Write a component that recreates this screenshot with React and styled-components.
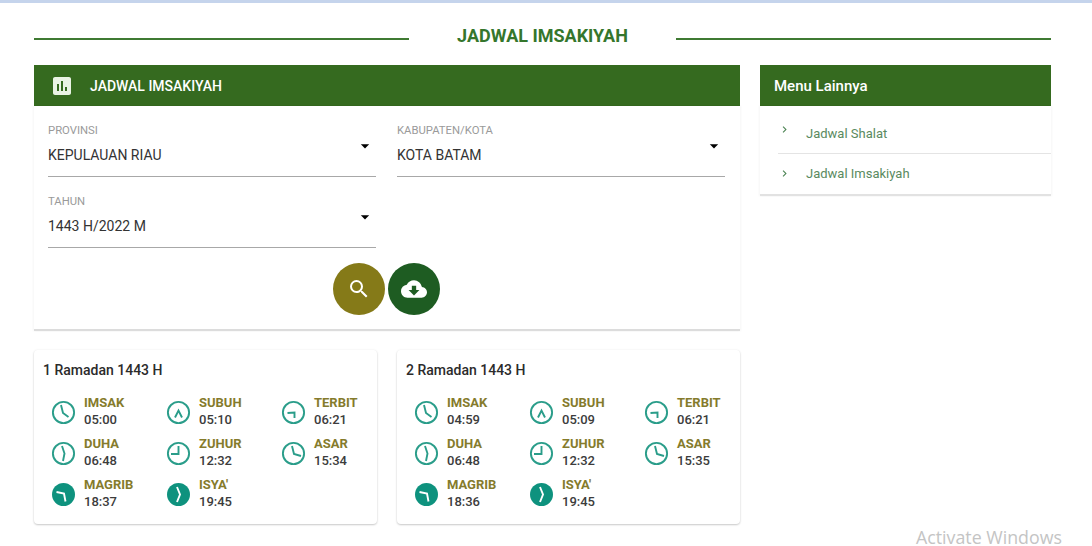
import styled, { createGlobalStyle } from "styled-components";
import { MdAssessment, MdSearch, MdCloudDownload, MdChevronRight, MdArrowDropDown } from "react-icons/md";

const GlobalStyle = createGlobalStyle`
  html, body {
    margin: 0;
    padding: 0;
    background: #fff;
  }
  body {
    font-family: Roboto, "Liberation Sans", sans-serif;
    overflow: hidden;
  }
`;

const Page = styled.div`
  position: relative;
  width: 1092px;
  height: 546px;
  overflow: hidden;
  border-top: 3px solid #c5d4ec;
  box-sizing: border-box;
  padding: 0 41px 0 34px;
`;

const TitleRow = styled.div`
  display: flex;
  align-items: center;
  height: 62px;
`;
const TitleLine = styled.div`
  flex: 1;
  height: 2px;
  margin-top: 9px;
  background: #3f7a32;
`;
const Title = styled.h1`
  margin: 2px 0 0;
  width: 267px;
  text-align: center;
  font-size: 18px;
  font-weight: 700;
  color: #35762c;
`;

const Columns = styled.div`
  display: grid;
  grid-template-columns: 706px 291px;
  gap: 20px;
  align-items: start;
`;

const HeaderBar = styled.div`
  display: flex;
  align-items: center;
  height: 41px;
  background: #356a1f;
  color: #fff;
  font-size: ${(p) => (p.$large ? "15px" : "14px")};
  font-weight: 500;
  padding-left: ${(p) => (p.$large ? "14px" : "16px")};
`;
const HeaderIcon = styled(MdAssessment)`
  font-size: 24px;
  margin-right: 16px;
  color: #e9f3e4;
`;

const FormCard = styled.div`
  height: 225px;
  box-sizing: border-box;
  padding: 13px 15px 0 14px;
  border-bottom: 2px solid #dcdcdc;
  box-shadow: -1px 0 2px rgba(0, 0, 0, 0.04), 1px 0 2px rgba(0, 0, 0, 0.04);
`;
const FieldGrid = styled.div`
  display: grid;
  grid-template-columns: 328px 328px;
  column-gap: 21px;
  row-gap: 13px;
`;
const Field = styled.div`
  position: relative;
  height: 57px;
  border-bottom: 1px solid #a8a8a8;
`;
const FieldLabel = styled.div`
  font-size: 11.3px;
  line-height: 14px;
  padding-top: 5px;
  color: #9a9a9a;
`;
const FieldValue = styled.div`
  font-size: 14px;
  line-height: 18px;
  margin-top: 8px;
  color: #333;
`;
const Caret = styled(MdArrowDropDown)`
  position: absolute;
  right: 1px;
  top: 17px;
  font-size: 20px;
  color: #000;
`;

const ButtonRow = styled.div`
  display: flex;
  justify-content: center;
  gap: 3px;
  margin-top: 15px;
`;
const RoundButton = styled.button`
  width: 52px;
  height: 52px;
  border: 0;
  padding: 0;
  border-radius: 50%;
  display: flex;
  align-items: center;
  justify-content: center;
  background: ${(p) => p.$bg};
  color: #fff;
  font-size: ${(p) => p.$size}px;
`;

const DayGrid = styled.div`
  display: grid;
  grid-template-columns: 343px 343px;
  gap: 20px;
  margin-top: 19px;
`;
const DayCard = styled.div`
  height: 174px;
  box-sizing: border-box;
  padding: 12px 0 0 9px;
  border-radius: 4px;
  box-shadow: 0 1px 2px rgba(0, 0, 0, 0.2), 0 0 3px rgba(0, 0, 0, 0.05);
`;
const DayTitle = styled.div`
  font-size: 14px;
  line-height: 16px;
  font-weight: 500;
  color: #2b2b2b;
`;
const TimeGrid = styled.div`
  display: grid;
  grid-template-columns: repeat(3, 115px);
  grid-auto-rows: 41px;
  margin-top: 12px;
  padding-left: 8px;
`;
const TimeItem = styled.div`
  display: flex;
  align-items: center;
`;
const ClockSvg = styled.svg`
  width: 25px;
  height: 25px;
  flex: none;
  margin-top: 3px;
  margin-right: 8px;
`;
const TimeName = styled.div`
  font-size: 13px;
  line-height: 17px;
  font-weight: 700;
  color: #857b2c;
`;
const TimeValue = styled.div`
  font-size: 13px;
  line-height: 17px;
  font-weight: 500;
  color: #3c3c3c;
`;

const MenuList = styled.ul`
  margin: 0;
  padding: 0 0 0 18px;
  list-style: none;
  height: 90px;
  box-sizing: border-box;
  border-bottom: 2px solid #e2e2e2;
  box-shadow: -1px 0 2px rgba(0, 0, 0, 0.04), 1px 0 2px rgba(0, 0, 0, 0.04);
`;
const MenuItem = styled.li`
  position: relative;
  display: flex;
  align-items: center;
  box-sizing: border-box;
  height: 47px;
  padding: 7px 0 0 28px;
  font-size: 13px;
  color: #5a8a60;
  & + & {
    height: 41px;
    padding-top: 0;
    padding-bottom: 2px;
    border-top: 1px solid #e4e4e4;
  }
`;
const MenuChevron = styled(MdChevronRight)`
  position: absolute;
  left: 0;
  top: ${(p) => p.$top}px;
  font-size: 13px;
  color: #4d8454;
`;

const Watermark = styled.div`
  position: absolute;
  left: 916px;
  top: 525px;
  font-family: "Open Sans", sans-serif;
  font-size: 17.8px;
  line-height: 18px;
  color: #c4c4c4;
`;

const TEAL = "#2a9d8a";
const TEAL_FILLED = "#0e927e";

// each clock only differs by where the hands point
const Clock = ({ hands, filled }) => (
  <ClockSvg viewBox="0 0 25 25">
    <circle
      cx="12.5"
      cy="12.5"
      r={filled ? 11.5 : 10.6}
      fill={filled ? TEAL_FILLED : "none"}
      stroke={TEAL}
      strokeWidth={filled ? 0 : 1.9}
    />
    <polyline points={hands} fill="none" stroke={filled ? "#fff" : TEAL} strokeWidth="1.9" />
  </ClockSvg>
);

const HANDS = {
  IMSAK: { hands: "10,5 12,13 17.5,17" },
  SUBUH: { hands: "9,17.5 12.5,10.5 16,17.5" },
  TERBIT: { hands: "6.5,13 13.5,12.5 13.5,18" },
  DUHA: { hands: "11,5 13.5,12.5 12,20" },
  ZUHUR: { hands: "12.5,5 12.5,13 5,13" },
  ASAR: { hands: "11,5 13,13 20,15" },
  MAGRIB: { hands: "5.5,10 13,11.5 14.5,19.5", filled: true },
  "ISYA'": { hands: "11,5 14,12.5 11,20", filled: true },
};

const days = [
  {
    title: "1 Ramadan 1443 H",
    times: ["05:00", "05:10", "06:21", "06:48", "12:32", "15:34", "18:37", "19:45"],
  },
  {
    title: "2 Ramadan 1443 H",
    times: ["04:59", "05:09", "06:21", "06:48", "12:32", "15:35", "18:36", "19:45"],
  },
];

const Select = ({ label, value }) => (
  <Field>
    <FieldLabel>{label}</FieldLabel>
    <FieldValue>{value}</FieldValue>
    <Caret />
  </Field>
);

const App = () => {
  return (
    <Page>
      <GlobalStyle />
      <TitleRow>
        <TitleLine />
        <Title>JADWAL IMSAKIYAH</Title>
        <TitleLine />
      </TitleRow>
      <Columns>
        <div>
          <HeaderBar>
            <HeaderIcon />
            JADWAL IMSAKIYAH
          </HeaderBar>
          <FormCard>
            <FieldGrid>
              <Select label="PROVINSI" value="KEPULAUAN RIAU" />
              <Select label="KABUPATEN/KOTA" value="KOTA BATAM" />
              <Select label="TAHUN" value="1443 H/2022 M" />
            </FieldGrid>
            <ButtonRow>
              <RoundButton $bg="#857a18" $size={24}>
                <MdSearch />
              </RoundButton>
              <RoundButton $bg="#1e5c22" $size={26}>
                <MdCloudDownload />
              </RoundButton>
            </ButtonRow>
          </FormCard>
          <DayGrid>
            {days.map((day) => (
              <DayCard key={day.title}>
                <DayTitle>{day.title}</DayTitle>
                <TimeGrid>
                  {Object.keys(HANDS).map((name, i) => (
                    <TimeItem key={name}>
                      <Clock {...HANDS[name]} />
                      <div>
                        <TimeName>{name}</TimeName>
                        <TimeValue>{day.times[i]}</TimeValue>
                      </div>
                    </TimeItem>
                  ))}
                </TimeGrid>
              </DayCard>
            ))}
          </DayGrid>
        </div>
        <div>
          <HeaderBar $large>Menu Lainnya</HeaderBar>
          <MenuList>
            <MenuItem>
              <MenuChevron $top={17} />
              Jadwal Shalat
            </MenuItem>
            <MenuItem>
              <MenuChevron $top={13} />
              Jadwal Imsakiyah
            </MenuItem>
          </MenuList>
        </div>
      </Columns>
      <Watermark>Activate Windows</Watermark>
    </Page>
  );
};

export default App;
